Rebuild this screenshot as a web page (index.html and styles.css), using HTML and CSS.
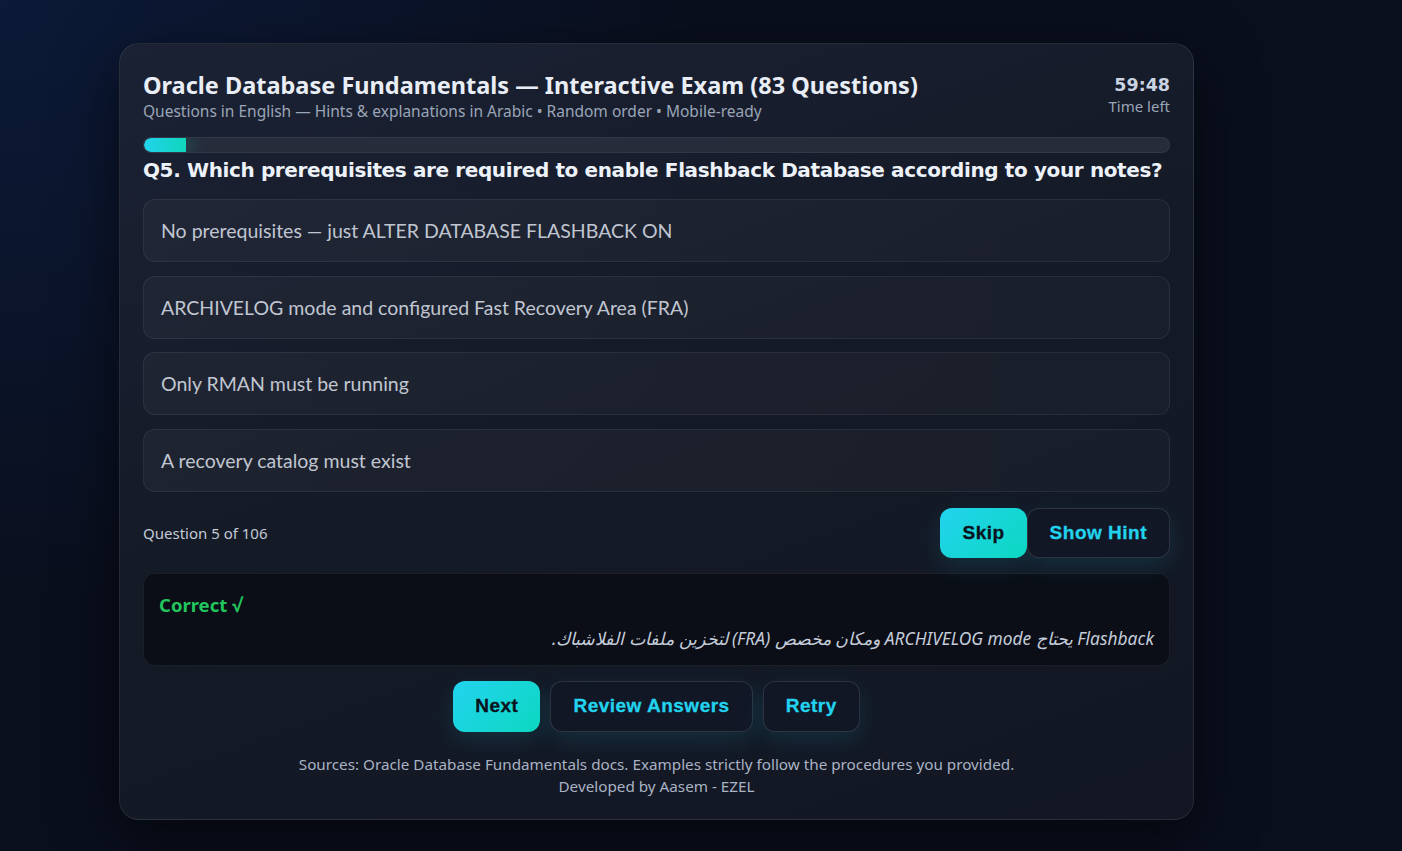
FILE: index.html
```html
<!DOCTYPE html>
<html lang="en">
<head>
<meta charset="utf-8">
<title>Oracle Database Fundamentals — Interactive Exam</title>
<link rel="stylesheet" href="styles.css">
</head>
<body>
<div class="page">
  <main class="card">
    <header class="head">
      <div class="head-text">
        <h1 class="title">Oracle Database Fundamentals — Interactive Exam (83 Questions)</h1>
        <p class="subtitle">Questions in English — Hints &amp; explanations in Arabic • Random order • Mobile-ready</p>
      </div>
      <div class="timer">
        <div class="timer-value">59:48</div>
        <div class="timer-label">Time left</div>
      </div>
    </header>
    <div class="progress"><div class="progress-fill" style="width:4.1%"></div></div>
    <h2 class="question">Q5. Which prerequisites are required to enable Flashback Database according to your notes?</h2>
    <div class="options">
      <button class="option">No prerequisites — just ALTER DATABASE FLASHBACK ON</button>
      <button class="option">ARCHIVELOG mode and configured Fast Recovery Area (FRA)</button>
      <button class="option">Only RMAN must be running</button>
      <button class="option">A recovery catalog must exist</button>
    </div>
    <div class="meta-row">
      <span class="counter">Question 5 of 106</span>
      <div class="btn-group tight">
        <button class="btn btn-primary">Skip</button>
        <button class="btn btn-ghost">Show Hint</button>
      </div>
    </div>
    <div class="feedback">
      <div class="feedback-status">Correct √</div>
      <p class="feedback-text" dir="rtl">Flashback يحتاج ARCHIVELOG mode ومكان مخصص (FRA) لتخزين ملفات الفلاشباك.</p>
    </div>
    <div class="actions">
      <button class="btn btn-primary btn-lg">Next</button>
      <button class="btn btn-ghost btn-lg">Review Answers</button>
      <button class="btn btn-ghost btn-lg">Retry</button>
    </div>
    <footer class="footer">
      <p>Sources: Oracle Database Fundamentals docs. Examples strictly follow the procedures you provided.</p>
      <p>Developed by Aasem - EZEL</p>
    </footer>
  </main>
</div>
</body>
</html>
```

FILE: styles.css
```css
* { box-sizing: border-box; }
html, body { height: 100%; }
body {
  margin: 0;
  background:
    radial-gradient(ellipse 700px 600px at 0% 0%, #0c1a38 0%, rgba(12,26,56,0) 100%),
    #0a0f1d;
  font-family: "Noto Sans", "Open Sans", sans-serif;
  color: #e6ebf3;
  overflow: hidden;
}
.page {
  padding: 43px 0 0 119px;
}
.card {
  width: 1075px;
  border-radius: 20px;
  border: 1px solid rgba(255,255,255,0.08);
  background: linear-gradient(160deg, #1b2234 0%, #151a27 45%, #121723 100%);
  box-shadow: 0 20px 60px rgba(0,0,0,0.55);
  padding: 26px 23px 22px 23px;
}
.head {
  display: flex;
  justify-content: space-between;
  align-items: flex-start;
}
.title {
  margin: 0;
  font-size: 23.5px;
  font-weight: 700;
  line-height: 30px;
  color: #e9eef6;
}
.subtitle {
  margin: 1px 0 0;
  font-size: 15.5px;
  line-height: 20px;
  color: #9aa5b7;
}
.timer {
  text-align: right;
  padding-top: 4px;
}
.timer-value {
  font-family: "DejaVu Sans", Verdana, sans-serif;
  font-size: 17.5px;
  font-weight: 700;
  line-height: 22px;
  color: #c9d3e1;
}
.timer-label {
  font-size: 15px;
  line-height: 20px;
  color: #9aa5b7;
}
.progress {
  margin-top: 16px;
  height: 16px;
  border-radius: 999px;
  background: #272c3b;
  border: 1px solid rgba(255,255,255,0.06);
  overflow: hidden;
}
.progress-fill {
  height: 100%;
  border-radius: 999px 0 0 999px;
  background: linear-gradient(90deg, #22d3ee, #0fd6bb);
  box-shadow: 8px 0 14px rgba(15,214,187,0.18);
}
.question {
  margin: 4px 0 16px;
  font-family: "DejaVu Sans", Verdana, sans-serif;
  font-size: 20px;
  font-weight: 700;
  line-height: 26px;
  color: #edf2f9;
  letter-spacing: -0.38px;
}
.options {
  display: flex;
  flex-direction: column;
  gap: 13.5px;
}
.option {
  display: block;
  width: 100%;
  height: 63px;
  text-align: left;
  padding: 0 17px;
  border-radius: 12px;
  border: 1px solid rgba(255,255,255,0.07);
  background: linear-gradient(90deg, rgba(255,255,255,0.035), rgba(255,255,255,0.025));
  font-family: Lato, "Noto Sans", sans-serif;
  font-size: 19.5px;
  color: #c0c6d1;
  cursor: pointer;
}
.meta-row {
  margin-top: 16px;
  display: flex;
  justify-content: space-between;
  align-items: center;
}
.counter {
  font-size: 15px;
  color: #c3cad6;
}
.btn-group {
  display: flex;
  gap: 10px;
}
.btn-group.tight { gap: 0; }
.btn {
  height: 50px;
  padding: 0 22px;
  border-radius: 12px;
  font-family: "Liberation Sans", Arial, sans-serif;
  font-size: 19px;
  font-weight: 700;
  letter-spacing: 0.5px;
  -webkit-text-stroke: 0.3px currentColor;
  cursor: pointer;
  box-shadow: 0 8px 24px rgba(34,211,238,0.12);
}
.btn-primary {
  border: none;
  background: linear-gradient(135deg, #22d3ee, #0dd8c1);
  color: #0a1220;
}
.btn-ghost {
  border: 1px solid rgba(255,255,255,0.12);
  background: #121726;
  color: #22d3ee;
}
.feedback {
  margin-top: 15px;
  border-radius: 12px;
  border: 1px solid rgba(255,255,255,0.07);
  background: #0b0e17;
  padding: 18px 15px 15px;
}
.feedback-status {
  font-size: 18.5px;
  font-weight: 700;
  line-height: 26px;
  color: #22c55e;
}
.feedback-text {
  margin: 8px 0 0;
  font-size: 17.4px;
  font-style: italic;
  line-height: 24px;
  color: #c4ccd9;
  text-align: right;
}
.actions {
  margin-top: 15px;
  display: flex;
  justify-content: center;
  gap: 10px;
}
.btn-lg { height: 51px; }
.footer {
  margin-top: 21px;
  text-align: center;
  font-size: 15.25px;
  line-height: 22px;
  color: #a9b3c4;
}
.footer p { margin: 0; }
```
